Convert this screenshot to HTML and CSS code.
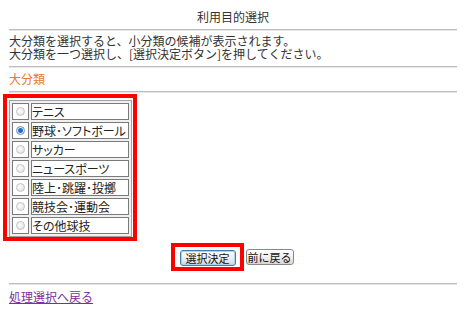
FILE: index.html
```html
<!DOCTYPE html>
<html lang="ja">
<head>
    <meta charset="UTF-8">
    <meta name="viewport" content="width=device-width, initial-scale=1.0">
    <title>利用目的選択</title>
    <link rel="stylesheet" href="styles.css">
</head>
<body>

<div class="page">
    <!-- Header -->
    <h1 class="title">利用目的選択</h1>
    <hr class="rule">
    <p class="guide">大分類を選択すると、小分類の候補が表示されます。<br>大分類を一つ選択し、[選択決定ボタン]を押してください。</p>
    <hr class="rule">
    <h2 class="section">大分類</h2>
    <hr class="rule">

    <!-- Category choices -->
    <div class="mark mark-list">
        <table class="choices">
            <tr><td class="pick"><input type="radio" name="category" id="c1"></td><td class="label"><label for="c1">テニス</label></td></tr>
            <tr><td class="pick"><input type="radio" name="category" id="c2" checked></td><td class="label"><label for="c2">野球･ソフトボール</label></td></tr>
            <tr><td class="pick"><input type="radio" name="category" id="c3"></td><td class="label"><label for="c3">サッカー</label></td></tr>
            <tr><td class="pick"><input type="radio" name="category" id="c4"></td><td class="label"><label for="c4">ニュースポーツ</label></td></tr>
            <tr><td class="pick"><input type="radio" name="category" id="c5"></td><td class="label"><label for="c5">陸上･跳躍･投擲</label></td></tr>
            <tr><td class="pick"><input type="radio" name="category" id="c6"></td><td class="label"><label for="c6">競技会･運動会</label></td></tr>
            <tr><td class="pick"><input type="radio" name="category" id="c7"></td><td class="label"><label for="c7">その他球技</label></td></tr>
        </table>
    </div>

    <!-- Actions -->
    <div class="actions">
        <div class="mark mark-button">
            <button type="button" class="btn btn-focus">選択決定</button>
        </div>
        <button type="button" class="btn">前に戻る</button>
    </div>

    <hr class="rule rule-bottom">
    <a class="back" href="#">処理選択へ戻る</a>
</div>

</body>
</html>
```

FILE: styles.css
```css
body {
    margin: 0;
    background: #fff;
    color: #333;
    font-family: "MS PGothic", "Noto Sans CJK JP", sans-serif;
    font-size: 12px;
}

.page {
    width: 448px;
    margin: 0 0 0 9px;
    padding-top: 10px;
}

.title {
    margin: 0;
    font-size: 12px;
    font-weight: normal;
    line-height: 14px;
    text-align: center;
}

.rule {
    height: 0;
    margin: 5px 0 0 0;
    border: none;
    border-top: 1px solid #bdbdbd;
    border-bottom: 1px solid #e6e6e6;
}

.guide {
    margin: 3px 0 6px 0;
    line-height: 13px;
}

.section {
    margin: 4px 0 1px 0;
    font-size: 12px;
    font-weight: normal;
    line-height: 14px;
    color: #e8782a;
}

.mark {
    border: 4px solid #f00;
}

.mark-list {
    width: 124px;
    margin: 1px 0 0 -6px;
    padding: 2px 0 0 2px;
}

.choices {
    border: 1px solid #a0a0a0;
    border-spacing: 2px;
    background: #f0f0f0;
}

.choices td {
    height: 15px;
    padding: 0;
    border: 1px solid #7a7a7a;
    background: #fff;
    line-height: 15px;
}

.pick {
    width: 15px;
    text-align: center;
}

.label {
    width: 96px;
    padding-left: 1px;
    color: #222;
    white-space: nowrap;
    font-feature-settings: "palt";
}

.pick input {
    appearance: none;
    display: block;
    width: 9px;
    height: 9px;
    margin: 0 auto;
    border: 1px solid #c4c4c4;
    border-radius: 50%;
    background: radial-gradient(circle at 40% 40%, #fff, #dcdcdc);
}

.pick input:checked {
    border-color: #6f8fb0;
    background: radial-gradient(circle, #1a6fd0 0, #1a6fd0 2px, #e8eef5 3px, #d8dde4 100%);
}

.actions {
    display: flex;
    justify-content: center;
    align-items: center;
    gap: 2px;
    margin: 2px 0 0 -2px;
}

.mark-button {
    display: flex;
    padding: 3px 4px 1px 5px;
}

.btn {
    height: 16px;
    padding: 0 1px;
    border: 1px solid #8a8a8a;
    border-radius: 3px;
    background: linear-gradient(#fefefe, #ececec 60%, #d6d6d6);
    color: #111;
    font-family: "MS PGothic", "Noto Sans CJK JP", sans-serif;
    font-size: 11px;
    line-height: 14px;
}

.btn-focus {
    padding: 0 5px;
    border-color: #3c7fb1;
    box-shadow: inset 0 0 0 1px #a6d4f2;
}

.rule-bottom {
    margin-top: 12px;
}

.back {
    display: inline-block;
    margin-top: 5px;
    line-height: 14px;
    color: #7b2f9b;
}
```
